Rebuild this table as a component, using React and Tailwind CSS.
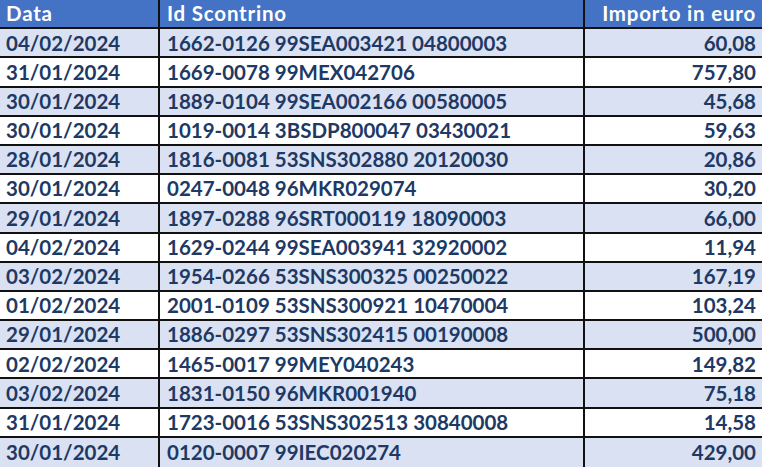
import React from 'react';

const rows = [
  ['04/02/2024', '1662-0126 99SEA003421 04800003', '60,08'],
  ['31/01/2024', '1669-0078 99MEX042706', '757,80'],
  ['30/01/2024', '1889-0104 99SEA002166 00580005', '45,68'],
  ['30/01/2024', '1019-0014 3BSDP800047 03430021', '59,63'],
  ['28/01/2024', '1816-0081 53SNS302880 20120030', '20,86'],
  ['30/01/2024', '0247-0048 96MKR029074', '30,20'],
  ['29/01/2024', '1897-0288 96SRT000119 18090003', '66,00'],
  ['04/02/2024', '1629-0244 99SEA003941 32920002', '11,94'],
  ['03/02/2024', '1954-0266 53SNS300325 00250022', '167,19'],
  ['01/02/2024', '2001-0109 53SNS300921 10470004', '103,24'],
  ['29/01/2024', '1886-0297 53SNS302415 00190008', '500,00'],
  ['02/02/2024', '1465-0017 99MEY040243', '149,82'],
  ['03/02/2024', '1831-0150 96MKR001940', '75,18'],
  ['31/01/2024', '1723-0016 53SNS302513 30840008', '14,58'],
  ['30/01/2024', '0120-0007 99IEC020274', '429,00'],
];

export default function App() {
  return (
    <div
      className="w-[762px] h-[467px] bg-white overflow-hidden grid grid-rows-16 font-bold text-[20.5px] leading-none"
      style={{ fontFamily: 'Lato, "Open Sans", sans-serif' }}
    >
      {/* header */}
      <div className="grid grid-cols-[160px_425px_1fr] bg-[#4472c4] text-white tracking-[0.8px] border-b-2 border-[#111]">
        <div className="flex items-center pl-[6px] border-r-2 border-[#111]">Data</div>
        <div className="flex items-center pl-[7px] border-r-2 border-[#111]">Id Scontrino</div>
        <div className="flex items-center justify-end pr-[6px]">Importo in euro</div>
      </div>
      {rows.map((r, i) => (
        <div
          key={i}
          className={
            'grid grid-cols-[160px_425px_1fr] text-[#203864] border-[#111] ' +
            (i % 2 === 0 ? 'bg-[#d9e1f2] ' : 'bg-white ') +
            (i === rows.length - 1 ? 'border-b-0' : 'border-b-2')
          }
        >
          <div className="flex items-center pl-[6px] border-r-2 border-[#111]">{r[0]}</div>
          <div className="flex items-center pl-[7px] border-r-2 border-[#111]">{r[1]}</div>
          <div className="flex items-center justify-end pr-[6px]">{r[2]}</div>
        </div>
      ))}
    </div>
  );
}
